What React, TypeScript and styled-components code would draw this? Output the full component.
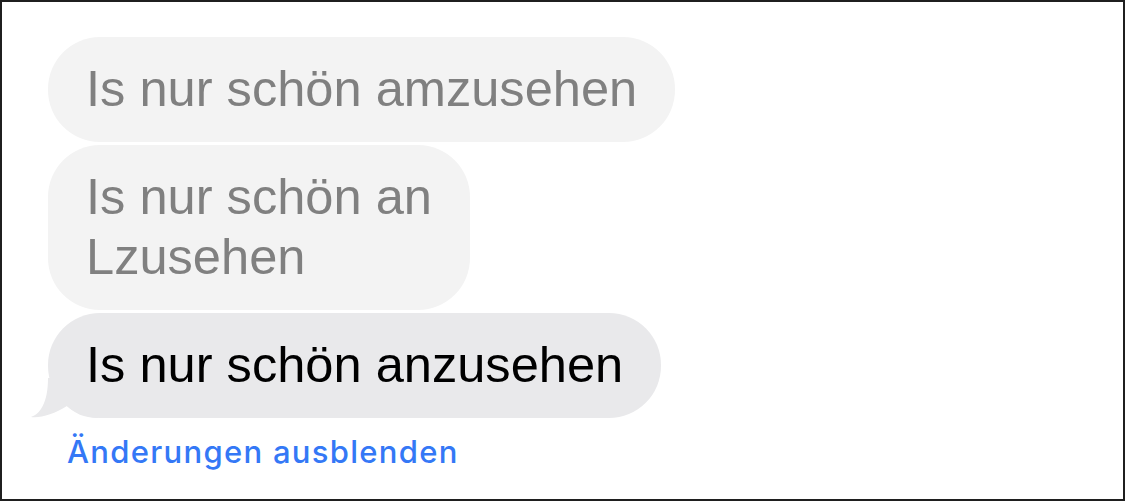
import React from "react";
import styled, { createGlobalStyle } from "styled-components";

const GlobalStyle = createGlobalStyle`
  html, body { margin: 0; padding: 0; background: #ffffff; }
  * { box-sizing: border-box; }
`;

const Frame = styled.div`
  width: 1125px;
  height: 501px;
  border: 2px solid #1f1f1f;
  background: #ffffff;
  padding: 35px 0 0 46px;
  display: flex;
  flex-direction: column;
  align-items: flex-start;
  font-family: "Liberation Sans", Arial, sans-serif;
`;

const Thread = styled.div`
  display: flex;
  flex-direction: column;
  align-items: flex-start;
  gap: 3px;
`;

const Bubble = styled.div<{ $current?: boolean }>`
  position: relative;
  padding: 22px 38px 23px 38px;
  border-radius: 52px;
  background: ${(p) => (p.$current ? "#e9e9eb" : "#f3f3f3")};
  color: ${(p) => (p.$current ? "#000000" : "#808080")};
  font-size: 50.6px;
  line-height: 60px;
  white-space: nowrap;
`;

const BubbleText = styled.span`
  position: relative;
`;

const Tail = styled.svg`
  position: absolute;
  left: -18px;
  bottom: 0;
  width: 70px;
  height: 45px;
  overflow: visible;
`;

const Link = styled.div`
  margin: 15px 0 0 19px;
  color: #3478f6;
  font-family: Inter, "Liberation Sans", sans-serif;
  font-weight: 500;
  font-size: 31px;
  letter-spacing: 1.3px;
  line-height: 37px;
`;

export default function App() {
  return (
    <>
      <GlobalStyle />
      <Frame>
        <Thread>
          <Bubble>Is nur schön amzusehen</Bubble>
          <Bubble>
            Is nur schön an
            <br />
            Lzusehen
          </Bubble>
          <Bubble $current>
            <Tail viewBox="0 0 70 45">
              <path
                d="M18,5 C18,30 10,41 1,44 C10,45.5 24,41 37,33 C44,40 54,45 68,45 L68,5 Z"
                fill="#e9e9eb"
              />
            </Tail>
            <BubbleText>Is nur schön anzusehen</BubbleText>
          </Bubble>
        </Thread>
        <Link>Änderungen ausblenden</Link>
      </Frame>
    </>
  );
}
